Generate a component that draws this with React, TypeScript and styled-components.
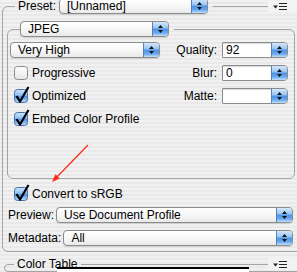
import React from "react";
import styled, { createGlobalStyle } from "styled-components";

const GlobalStyle = createGlobalStyle`
  html, body { margin: 0; padding: 0; }
  body {
    background: repeating-linear-gradient(to bottom, #f1f1f1 0, #f1f1f1 2px, #e9e9e9 2px, #e9e9e9 4px);
    font-family: "Liberation Sans", Arial, sans-serif;
    font-size: 12px;
    color: #000;
  }
`;

const lineColor = "#a4a4a4";

const Panel = styled.div`
  position: relative;
  width: 297px;
  height: 272px;
  overflow: hidden;
`;

const Group = styled.fieldset<{ $left: number; $top: number; $width: number; $bottom?: number }>`
  box-sizing: border-box;
  min-width: 0;
  width: ${({ $width }) => $width}px;
  margin: ${({ $top }) => $top}px 0 0 ${({ $left }) => $left}px;
  padding: 0 0 ${({ $bottom }) => $bottom || 0}px 0;
  border: 1px solid ${lineColor};
  border-radius: 6px;
`;

const Legend = styled.legend<{ $offset: number; $width?: number; $padLeft?: number; $padRight?: number }>`
  display: flex;
  align-items: center;
  box-sizing: border-box;
  width: ${({ $width }) => ($width ? `${$width}px` : "auto")};
  margin-left: ${({ $offset }) => $offset}px;
  padding: 0 ${({ $padRight }) => $padRight || 0}px 0 ${({ $padLeft }) => $padLeft || 0}px;
  line-height: 14px;
`;

const LegendLabel = styled.span`
  margin-right: 3px;
  white-space: nowrap;
`;

const Rule = styled.span<{ $gap: number }>`
  flex: 1;
  height: 1px;
  margin-left: ${({ $gap }) => $gap}px;
  background: ${lineColor};
`;

const MenuButton = styled.span`
  flex: none;
  width: 29px;
  height: 12px;
  display: flex;
  align-items: center;
  padding-left: 5px;
  box-sizing: border-box;
  background: #f3f3f3;
`;

const PopupBox = styled.div<{ $width?: number }>`
  display: flex;
  box-sizing: border-box;
  width: ${({ $width }) => ($width ? `${$width}px` : "auto")};
  flex: ${({ $width }) => ($width ? "none" : "1")};
  height: 16px;
  border: 1px solid #8b8b8b;
  border-radius: 4px;
  background: linear-gradient(#ffffff, #f6f6f6 55%, #e9e9e9);
  box-shadow: 0 1px 1px rgba(0, 0, 0, 0.12);
  overflow: hidden;
`;

const PopupText = styled.span`
  flex: 1;
  padding-left: 7px;
  line-height: 14px;
  white-space: nowrap;
  overflow: hidden;
`;

const Stepper = styled.span`
  flex: none;
  width: 15px;
  display: flex;
  align-items: center;
  justify-content: center;
  border-left: 1px solid #5a7fb8;
  background: linear-gradient(#d4e8fc 0%, #9ac6f4 40%, #4d94e6 52%, #69a9ef 78%, #c2e1fb 100%);
`;

const Combo = styled.div`
  display: flex;
  box-sizing: border-box;
  width: 66px;
  height: 16px;
  border: 1px solid #8b8b8b;
  border-radius: 1px 4px 4px 1px;
  background: #fff;
  overflow: hidden;
`;

const ComboValue = styled.span`
  flex: 1;
  padding-left: 3px;
  line-height: 14px;
  box-shadow: inset 0 1px 1px rgba(0, 0, 0, 0.15);
`;

const OptionsGrid = styled.div`
  display: grid;
  grid-template-columns: 152px 1fr;
  grid-auto-rows: 16px;
  row-gap: 7px;
  padding: 5px 6px 51px 2px;
`;

const FieldCell = styled.div`
  display: flex;
  align-items: center;
  justify-content: flex-end;
  gap: 5px;
`;

const CheckRow = styled.label<{ $indent: number; $top?: number }>`
  display: flex;
  align-items: center;
  gap: 4px;
  height: 16px;
  margin-top: ${({ $top }) => $top || 0}px;
  padding-left: ${({ $indent }) => $indent}px;
  white-space: nowrap;
`;

const Box = styled.span`
  display: flex;
  width: 14px;
  height: 14px;
`;

const FormRow = styled.div<{ $top: number }>`
  display: flex;
  align-items: center;
  gap: 2px;
  box-sizing: border-box;
  width: 290px;
  height: 16px;
  margin-top: ${({ $top }) => $top}px;
  padding-left: 5px;
`;

const Swatches = styled.div`
  position: relative;
  width: 192px;
  height: 20px;
  margin: -5px 0 0 57px;
  border-top: 2px solid #000;
  background: #fff;
`;

const Annotation = styled.svg`
  position: absolute;
  left: 0;
  top: 0;
  pointer-events: none;
`;

const Arrows = () => (
  <svg width="7" height="10" viewBox="0 0 7 10">
    <path d="M3.5 1 L6 4 H1 Z M1 6 H6 L3.5 9 Z" fill="#111" />
  </svg>
);

const Popup = ({ label, width }: { label: string; width?: number }) => (
  <PopupBox $width={width}>
    <PopupText>{label}</PopupText>
    <Stepper>
      <Arrows />
    </Stepper>
  </PopupBox>
);

const Field = ({ label, value }: { label: string; value: string }) => (
  <FieldCell>
    <span>{label}</span>
    <Combo>
      <ComboValue>{value}</ComboValue>
      <Stepper>
        <Arrows />
      </Stepper>
    </Combo>
  </FieldCell>
);

const MenuIcon = () => (
  <MenuButton>
    <svg width="14" height="7" viewBox="0 0 14 7">
      <path d="M0 2.5 H5 L2.5 5.5 Z" fill="#222" />
      <rect x="6" y="0" width="8" height="1" fill="#222" />
      <rect x="6" y="3" width="8" height="1" fill="#222" />
      <rect x="6" y="6" width="8" height="1" fill="#222" />
    </svg>
  </MenuButton>
);

const Checkbox = ({ checked }: { checked?: boolean }) => (
  <Box>
    <svg width="14" height="14" viewBox="0 0 14 14" style={{ overflow: "visible" }}>
      <defs>
        <linearGradient id="aqua" x1="0" y1="0" x2="0" y2="1">
          <stop offset="0" stopColor="#cfe5fb" />
          <stop offset="0.45" stopColor="#8cc0f2" />
          <stop offset="0.55" stopColor="#4b92e5" />
          <stop offset="1" stopColor="#bfe0fb" />
        </linearGradient>
        <linearGradient id="plain" x1="0" y1="0" x2="0" y2="1">
          <stop offset="0" stopColor="#ffffff" />
          <stop offset="1" stopColor="#e6e6e6" />
        </linearGradient>
      </defs>
      <rect
        x="0.5"
        y="0.5"
        width="13"
        height="13"
        rx="3"
        fill={checked ? "url(#aqua)" : "url(#plain)"}
        stroke={checked ? "#4a6fa8" : "#8a8a8a"}
      />
      {checked && (
        <path d="M2.5 7 L6 12.5 L14.5 -2" fill="none" stroke="#000" strokeWidth="2.2" strokeLinejoin="round" />
      )}
    </svg>
  </Box>
);

const Check = ({ label, checked, indent, top }: { label: string; checked?: boolean; indent: number; top?: number }) => (
  <CheckRow $indent={indent} $top={top}>
    <Checkbox checked={checked} />
    <span>{label}</span>
  </CheckRow>
);

const App = () => (
  <>
    <GlobalStyle />
    <Panel>
      <Group $left={2} $top={-2} $width={300} $bottom={5}>
        <Legend $offset={12} $width={282} $padLeft={3}>
          <LegendLabel>Preset:</LegendLabel>
          <Popup label="[Unnamed]" width={149} />
          <Rule $gap={5} />
          <MenuIcon />
        </Legend>

        <Group $left={4} $top={7} $width={288}>
          <Legend $offset={12} $padRight={5}>
            <Popup label="JPEG" width={149} />
          </Legend>
          <OptionsGrid>
            <Popup label="Very High" width={150} />
            <Field label="Quality:" value="92" />
            <Check label="Progressive" indent={4} />
            <Field label="Blur:" value="0" />
            <Check label="Optimized" checked indent={4} />
            <Field label="Matte:" value="" />
            <Check label="Embed Color Profile" checked indent={4} />
          </OptionsGrid>
        </Group>

        <Check label="Convert to sRGB" checked indent={11} top={7} />
        <FormRow $top={5}>
          <span>Preview:</span>
          <Popup label="Use Document Profile" />
        </FormRow>
        <FormRow $top={7}>
          <span>Metadata:</span>
          <Popup label="All" />
        </FormRow>
      </Group>

      <Group $left={4} $top={5} $width={300}>
        <Legend $offset={9} $width={283} $padLeft={3}>
          <span>Color Table</span>
          <Rule $gap={4} />
          <MenuIcon />
        </Legend>
      </Group>
      <Swatches />

      <Annotation width="297" height="272">
        <line x1="88" y1="145" x2="55" y2="179" stroke="#ff2a1a" strokeWidth="1.2" />
        <polygon points="52,182 59.7,178.4 55.4,174.2" fill="#ff2a1a" />
      </Annotation>
    </Panel>
  </>
);

export default App;
